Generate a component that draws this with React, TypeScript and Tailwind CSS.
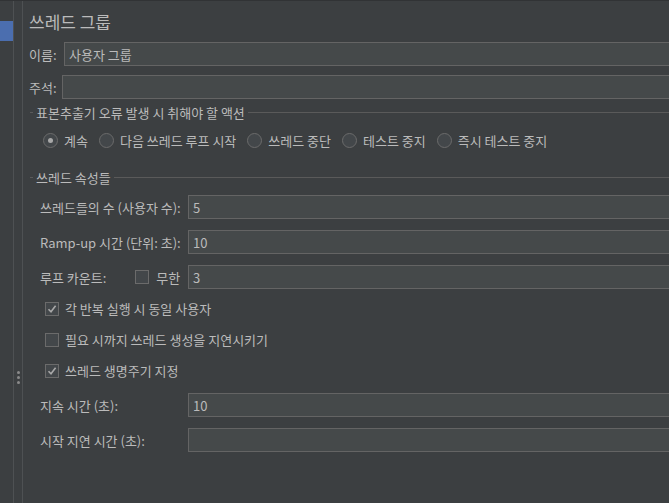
import React from 'react';

const FONT = "font-['Noto_Sans_CJK_KR','Liberation_Sans',sans-serif]";

const Radio = ({ label, checked }: { label: string; checked?: boolean }) => (
  <div className="flex items-center">
    <span className="w-[15px] h-[15px] rounded-full border border-[#6b6b6b] bg-[#43474a] flex items-center justify-center">
      {checked && <span className="w-[5px] h-[5px] rounded-full bg-[#a8a8a8]" />}
    </span>
    <span className="ml-[6px]">{label}</span>
  </div>
);

const Check = ({ checked }: { checked?: boolean }) => (
  <span className="w-[14px] h-[14px] border border-[#6b6b6b] bg-[#43474a] flex items-center justify-center shrink-0">
    {checked && (
      <svg width="10" height="10" viewBox="0 0 10 10">
        <path d="M1.5 5.2 L4 7.8 L8.6 1.8" fill="none" stroke="#a8a8a8" strokeWidth="1.6" />
      </svg>
    )}
  </span>
);

const Field = ({ value, className = '' }: { value?: string; className?: string }) => (
  <div className={`h-[24px] flex-1 bg-[#45494a] border border-[#646464] flex items-center pl-[4px] text-[#bbbbbb] ${className}`}>
    {value}
  </div>
);

const Legend = ({ title }: { title: string }) => (
  <div className="flex items-center ml-[1px] h-full">
    <div className="w-[3px] h-px bg-[#5a5a5a]" />
    <span className="ml-[3px]">{title}</span>
    <div className="flex-1 h-px bg-[#5a5a5a] ml-[3px]" />
  </div>
);

const Row = ({ label, value, children }: { label: string; value?: string; children?: React.ReactNode }) => (
  <div className="flex items-center h-[24px] pl-[11px]">
    <div className="w-[148px] flex items-center shrink-0">
      <span>{label}</span>
      {children}
    </div>
    <Field value={value} />
  </div>
);

const CheckRow = ({ label, checked }: { label: string; checked?: boolean }) => (
  <div className="flex items-center h-[31px] pl-[16px]">
    <Check checked={checked} />
    <span className="ml-[6px]">{label}</span>
  </div>
);

export default function App() {
  return (
    <div className={`w-[669px] h-[503px] bg-[#3c3f41] flex overflow-hidden border-t border-[#313335] text-[13px] leading-none text-[#bbbbbb] ${FONT}`}>
      {/* tree pane edge */}
      <div className="w-[13px] shrink-0 pt-[20px]">
        <div className="h-[20px] bg-[#4b6eaf]" />
      </div>
      <div className="w-px shrink-0 bg-[#4e5153]" />
      <div className="w-[8px] shrink-0 flex flex-col items-center gap-[2px] pt-[370px]">
        <span className="w-[3px] h-[3px] rounded-full bg-[#8a8a8a]" />
        <span className="w-[3px] h-[3px] rounded-full bg-[#8a8a8a]" />
        <span className="w-[3px] h-[3px] rounded-full bg-[#8a8a8a]" />
      </div>
      <div className="w-px shrink-0 bg-[#4e5153]" />

      {/* main form */}
      <div className="flex-1 min-w-0 overflow-hidden">
        <div className="w-[calc(100%+20px)] pl-[6px]">
          <div className="h-[40px] flex items-center text-[17px]">쓰레드 그룹</div>

          <div className="flex items-center h-[24px] mt-[1px]">
            <span className="w-[35px] shrink-0">이름:</span>
            <Field value="사용자 그룹" />
          </div>
          <div className="flex items-center h-[24px] mt-[9px]">
            <span className="w-[33px] shrink-0">주석:</span>
            <Field />
          </div>

          <div className="h-[26px]">
            <Legend title="표본추출기 오류 발생 시 취해야 할 액션" />
          </div>
          <div className="h-[30px] flex items-center gap-[11px] pl-[14px]">
            <Radio label="계속" checked />
            <Radio label="다음 쓰레드 루프 시작" />
            <Radio label="쓰레드 중단" />
            <Radio label="테스트 중지" />
            <Radio label="즉시 테스트 중지" />
          </div>

          <div className="h-[22px] mt-[11px]">
            <Legend title="쓰레드 속성들" />
          </div>

          <div className="mt-[7px] flex flex-col gap-[11px]">
            <Row label="쓰레드들의 수 (사용자 수):" value="5" />
            <Row label="Ramp-up 시간 (단위: 초):" value="10" />
            <Row label="루프 카운트:" value="3">
              <span className="ml-[29px]">
                <Check />
              </span>
              <span className="ml-[7px]">무한</span>
            </Row>
          </div>

          <div className="mt-[4px]">
            <CheckRow label="각 반복 실행 시 동일 사용자" checked />
            <CheckRow label="필요 시까지 쓰레드 생성을 지연시키기" />
            <CheckRow label="쓰레드 생명주기 지정" checked />
          </div>

          <div className="mt-[7px] flex flex-col gap-[11px]">
            <Row label="지속 시간 (초):" value="10" />
            <Row label="시작 지연 시간 (초):" />
          </div>
        </div>
      </div>
    </div>
  );
}
